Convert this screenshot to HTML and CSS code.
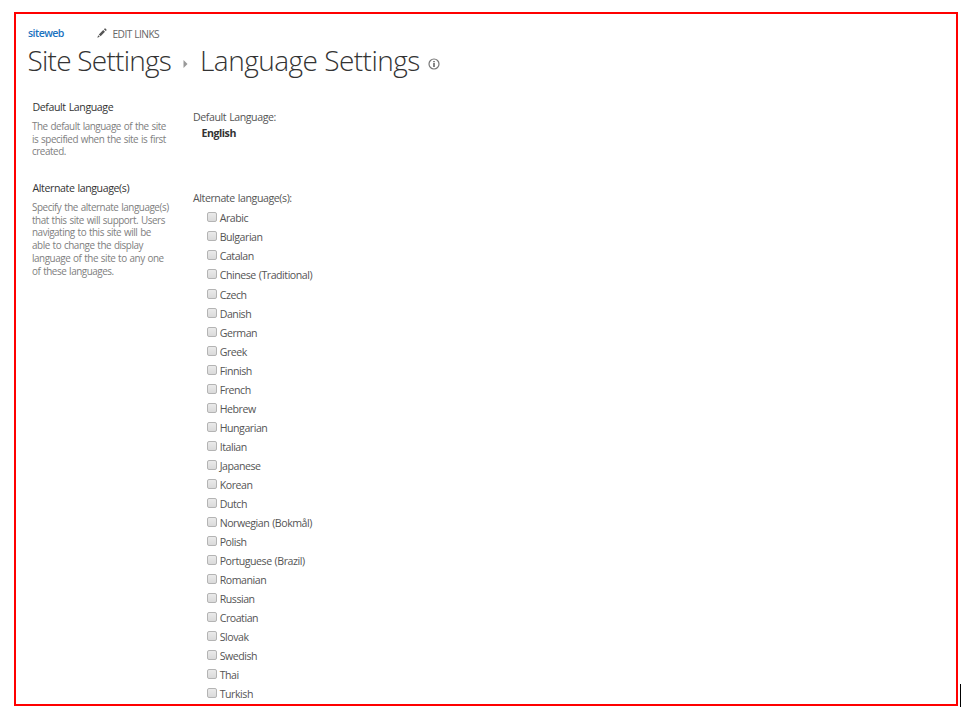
FILE: index.html
```html
<!DOCTYPE html>
<html lang="en">
<head>
<meta charset="utf-8">
<title>Language Settings</title>
<link rel="stylesheet" href="styles.css">
</head>
<body>
<div class="page">
<main class="frame">
  <nav class="top-links">
    <a class="site-link">siteweb</a>
    <a class="edit-link"><svg class="pencil" viewBox="0 0 10 10" width="10" height="10"><path d="M0.3 9.7 1.2 7.2 2.8 8.8ZM1.8 6.4 6.2 2 8 3.8 3.6 8.2ZM6.9 1.3 7.6.6Q8.1.2 8.6.6L9.4 1.4Q9.8 1.9 9.4 2.4L8.7 3.1Z" fill="#555"/></svg><span>EDIT LINKS</span></a>
  </nav>
  <h1 class="title">
    <span class="crumb">Site Settings</span>
    <svg class="arrow" viewBox="0 0 5 8" width="5" height="8"><path d="M.5 0 4.5 4 .5 8Z" fill="#999"/></svg>
    <span class="current">Language Settings</span>
    <svg class="info" viewBox="0 0 12 12" width="12" height="12"><circle cx="6" cy="6" r="5" fill="none" stroke="#777" stroke-width="1.2"/><path d="M5.2 2.9h1.6v1.3H5.2ZM5.2 5h1.6v4H5.2Z" fill="#666"/></svg>
  </h1>
  <section class="section default-section">
    <div class="description">
      <h2>Default Language</h2>
      <p>The default language of the site<br>is specified when the site is first<br>created.</p>
    </div>
    <div class="control">
      <div class="label">Default Language:</div>
      <div class="value">English</div>
    </div>
  </section>
  <section class="section">
    <div class="description">
      <h2>Alternate language(s)</h2>
      <p>Specify the alternate language(s)<br>that this site will support. Users<br>navigating to this site will be<br>able to change the display<br>language of the site to any one<br>of these languages.</p>
    </div>
    <div class="control">
      <div class="label">Alternate language(s):</div>
      <ul class="languages">
        <li><label><input type="checkbox"><span>Arabic</span></label></li>
        <li><label><input type="checkbox"><span>Bulgarian</span></label></li>
        <li><label><input type="checkbox"><span>Catalan</span></label></li>
        <li><label><input type="checkbox"><span>Chinese (Traditional)</span></label></li>
        <li><label><input type="checkbox"><span>Czech</span></label></li>
        <li><label><input type="checkbox"><span>Danish</span></label></li>
        <li><label><input type="checkbox"><span>German</span></label></li>
        <li><label><input type="checkbox"><span>Greek</span></label></li>
        <li><label><input type="checkbox"><span>Finnish</span></label></li>
        <li><label><input type="checkbox"><span>French</span></label></li>
        <li><label><input type="checkbox"><span>Hebrew</span></label></li>
        <li><label><input type="checkbox"><span>Hungarian</span></label></li>
        <li><label><input type="checkbox"><span>Italian</span></label></li>
        <li><label><input type="checkbox"><span>Japanese</span></label></li>
        <li><label><input type="checkbox"><span>Korean</span></label></li>
        <li><label><input type="checkbox"><span>Dutch</span></label></li>
        <li><label><input type="checkbox"><span>Norwegian (Bokmål)</span></label></li>
        <li><label><input type="checkbox"><span>Polish</span></label></li>
        <li><label><input type="checkbox"><span>Portuguese (Brazil)</span></label></li>
        <li><label><input type="checkbox"><span>Romanian</span></label></li>
        <li><label><input type="checkbox"><span>Russian</span></label></li>
        <li><label><input type="checkbox"><span>Croatian</span></label></li>
        <li><label><input type="checkbox"><span>Slovak</span></label></li>
        <li><label><input type="checkbox"><span>Swedish</span></label></li>
        <li><label><input type="checkbox"><span>Thai</span></label></li>
        <li><label><input type="checkbox"><span>Turkish</span></label></li>
      </ul>
    </div>
  </section>
</main>
<div class="caret"></div>
</div>
</body>
</html>
```
FILE: styles.css
```css
* { box-sizing: border-box; }
body {
  margin: 0;
  background: #fff;
  color: #444;
  font-family: "Open Sans", "Noto Sans", sans-serif;
  font-size: 10.6px;
}
.page {
  display: flex;
  align-items: flex-end;
  gap: 2px;
  height: 717px;
  padding: 12px 0 10px 14px;
  overflow: hidden;
}
.frame {
  width: 944px;
  height: 694px;
  margin-bottom: 1px;
  border: 2px solid #f00;
  padding: 11px 0 0 12px;
  overflow: hidden;
}
.caret { width: 1px; height: 23px; background: #000; }
.top-links { display: flex; height: 16px; line-height: 16px; }
.site-link {
  width: 69px;
  color: #1b72c0;
  font-weight: 600;
  letter-spacing: -0.55px;
}
.edit-link { display: flex; align-items: center; color: #666; font-size: 10.2px; letter-spacing: -0.57px; word-spacing: 0.5px; }
.edit-link span { margin: 1px 0 0 5.5px; }
.title {
  display: flex;
  align-items: center;
  height: 38px;
  margin: 0 0 2px;
  color: #333;
  font-size: 28px;
  font-weight: 300;
  line-height: 38px;
  white-space: nowrap;
}
.crumb { width: 155.5px; margin-left: -0.5px; letter-spacing: -0.76px; }
.arrow { margin-top: 8px; }
.current { width: 228px; margin-left: 12px; letter-spacing: -0.52px; }
.info { margin-top: 8px; }
.section { display: flex; }
.default-section { height: 81px; }
.description { width: 165px; padding: 18px 0 0 4px; }
h2 {
  margin: 0 0 5px 0.5px;
  color: #333;
  font-size: 10.6px;
  font-weight: 400;
  line-height: 16px;
  letter-spacing: -0.4px;
  word-spacing: 0.6px;
}
p {
  margin: 0;
  color: #808080;
  font-size: 9.9px;
  line-height: 12.7px;
  letter-spacing: -0.45px;
  word-spacing: 0.7px;
  white-space: nowrap;
}
.control { padding-top: 28px; color: #555; }
.label { height: 16px; line-height: 17px; letter-spacing: -0.42px; word-spacing: 0.7px; }
.value { margin-left: 8.5px; line-height: 16px; color: #333; font-weight: 700; letter-spacing: -0.45px; }
.languages { margin: 2.45px 0 0 14px; padding: 0; list-style: none; }
.languages li { height: 19.03px; }
.languages label { display: flex; line-height: 20px; letter-spacing: -0.46px; word-spacing: 0.7px; }
.languages input {
  appearance: none;
  width: 10px;
  height: 10px;
  margin: 4px 2.7px 0 0;
  border: 1px solid #b4b4b4;
  border-radius: 2px;
  background: linear-gradient(#eaeaea, #dadada);
}
```
